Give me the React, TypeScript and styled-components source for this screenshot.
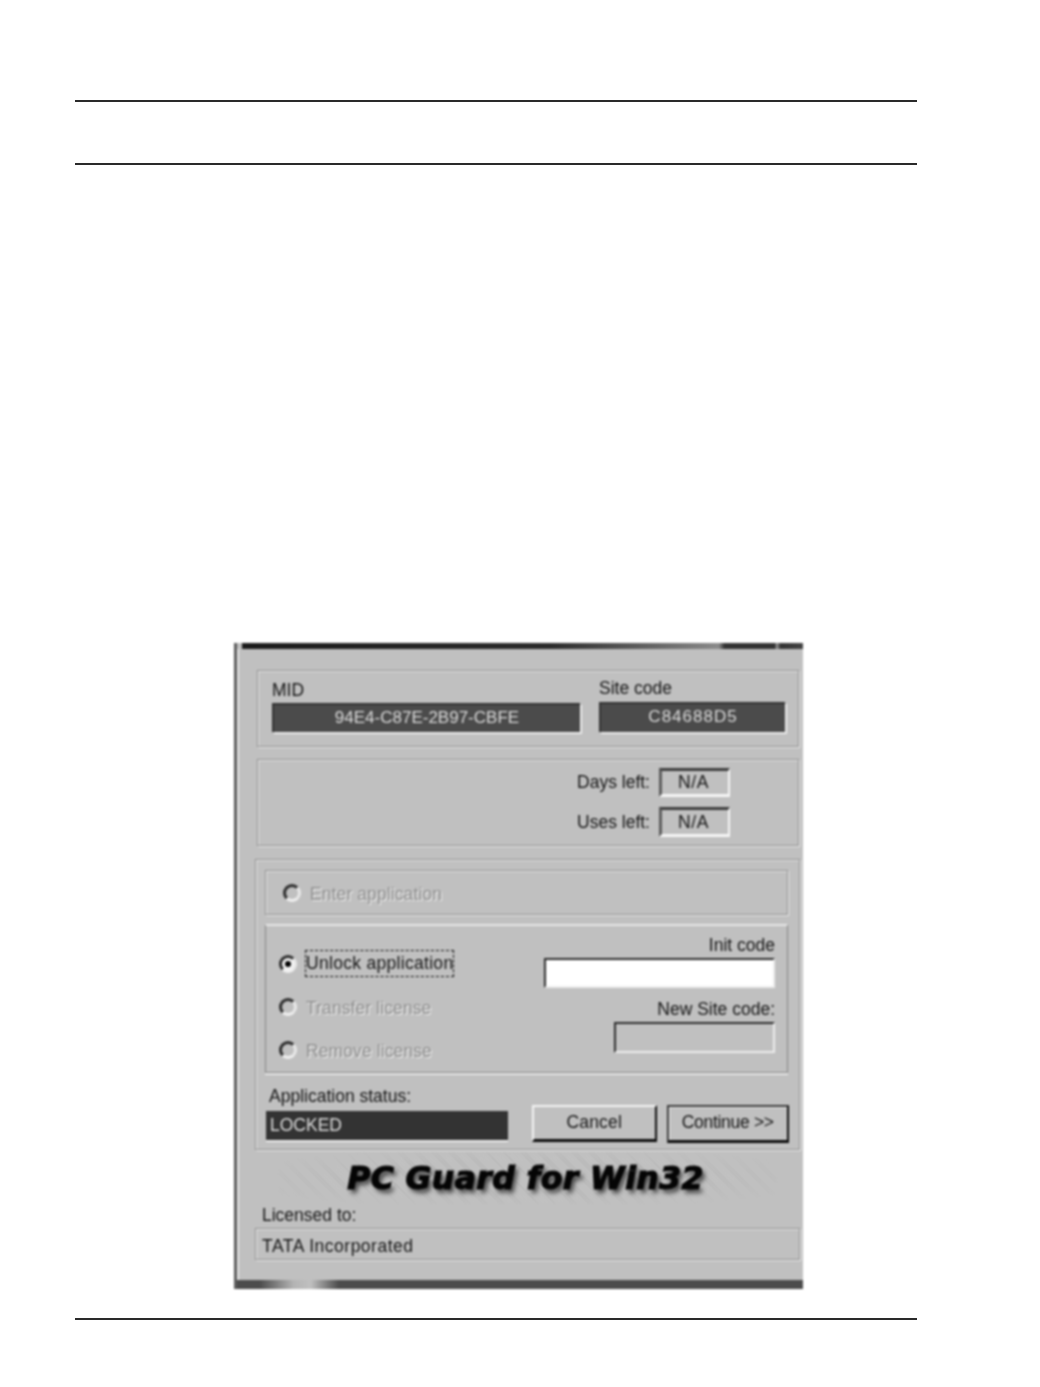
import React from "react";
import styled, { createGlobalStyle } from "styled-components";

const Global = createGlobalStyle`
  html, body { margin: 0; padding: 0; background: #fff; }
  * { box-sizing: border-box; }
`;

const Page = styled.div`
  width: 1040px;
  height: 1387px;
  padding-top: 100px;
  background: #fff;
  overflow: hidden;
  font-family: "Liberation Sans", Arial, sans-serif;
`;

const Rule = styled.div<{ $gap?: number }>`
  width: 842px;
  height: 2px;
  margin-left: 75px;
  margin-top: ${(p) => p.$gap ?? 0}px;
  background: #2a2a2a;
`;

const Dialog = styled.div`
  width: 569px;
  height: 646px;
  margin: 478px 0 0 234px;
  display: flex;
  flex-direction: column;
  background: #c0c0c0;
  color: #141414;
  font-size: 17.5px;
  filter: blur(0.85px);
  border-left: 3px solid #5c5c5c;
`;

const TitleStrip = styled.div`
  height: 6px;
  flex: none;
  margin-left: 5px;
  background: linear-gradient(
    90deg,
    #1c1c1c 0,
    #2c2c2c 55%,
    #8a8a8a 85%,
    #333 86%,
    #333 95%,
    #999 95.3%,
    #333 96%,
    #444 100%
  );
`;

const Body = styled.div`
  flex: 1;
  min-height: 0;
  padding: 21px 3px 0 16px;
  box-shadow: inset 2px 0 0 #e4e4e4;
`;

const Etched = styled.div`
  border: 1px solid #8e8e8e;
  box-shadow: 1px 1px 0 #ececec, inset 1px 1px 0 #e6e6e6;
`;

const IdGroup = styled(Etched)`
  width: 542px;
  height: 77px;
  margin-left: 4px;
  padding: 0 0 14px 14px;
  display: flex;
  align-items: flex-end;
  gap: 19px;
`;

const IdColumn = styled.div`
  display: flex;
  flex-direction: column;
`;

const Label = styled.div<{ $after?: number; $before?: number; $indent?: number }>`
  height: 20px;
  line-height: 20px;
  white-space: nowrap;
  margin-top: ${(p) => p.$before ?? 0}px;
  margin-bottom: ${(p) => p.$after ?? 3}px;
  margin-left: ${(p) => p.$indent ?? 0}px;
`;

const DarkField = styled.div<{ $w: number; $h: number; $spread?: number }>`
  width: ${(p) => p.$w}px;
  height: ${(p) => p.$h}px;
  line-height: ${(p) => p.$h - 4}px;
  text-align: center;
  font-size: 17px;
  letter-spacing: ${(p) => p.$spread ?? 0}px;
  background: #4b4b4b;
  color: #dcdcdc;
  border-top: 2px solid #333;
  border-left: 2px solid #333;
  box-shadow: 2px 2px 0 #ececec;
`;

const CounterGroup = styled(Etched)`
  width: 542px;
  height: 87px;
  margin: 12px 0 0 4px;
  padding: 8px 68px 0 0;
  display: flex;
  flex-direction: column;
  align-items: flex-end;
  gap: 10px;
`;

const CounterRow = styled.div`
  display: flex;
  align-items: center;
  gap: 9px;
`;

const CounterBox = styled.div<{ $h: number }>`
  width: 71px;
  height: ${(p) => p.$h}px;
  line-height: ${(p) => p.$h - 6}px;
  padding-right: 3px;
  text-align: center;
  letter-spacing: 0.6px;
  border-top: 3px solid #3e3e3e;
  border-left: 3px solid #5e5e5e;
  border-right: 2px solid #f6f6f6;
  border-bottom: 3px solid #f6f6f6;
`;

const ActionGroup = styled(Etched)`
  width: 545px;
  height: 291px;
  margin: 13px 0 0 2px;
  padding: 10px 0 0 9px;
`;

const DisabledPanel = styled(Etched)`
  width: 523px;
  height: 45px;
  padding-left: 17px;
  display: flex;
  align-items: center;
  gap: 9px;
`;

const UnlockPanel = styled.div`
  width: 523px;
  height: 149px;
  margin-top: 9px;
  padding: 0 12px 0 13px;
  display: flex;
  justify-content: space-between;
  border: 1px solid #858585;
  border-top-color: #e6e6e6;
  border-top-width: 2px;
  box-shadow: 0 2px 0 #e6e6e6;
`;

const Options = styled.div`
  padding-top: 16px;
  display: flex;
  flex-direction: column;
`;

const OptionRow = styled.div`
  height: 43px;
  display: flex;
  align-items: center;
  gap: 9px;
`;

const Radio = styled.span<{ $checked?: boolean }>`
  position: relative;
  flex: none;
  width: 18px;
  height: 18px;
  border-radius: 50%;
  border: 3px solid;
  border-color: #2e2e2e #e8e8e8 #f0f0f0 #2e2e2e;
  background: ${(p) => (p.$checked ? "#f4f4f4" : "#c0c0c0")};
  &::after {
    content: "";
    display: ${(p) => (p.$checked ? "block" : "none")};
    position: absolute;
    left: 3px;
    top: 3px;
    width: 6px;
    height: 6px;
    border-radius: 50%;
    background: #000;
  }
`;

const OptionText = styled.span<{ $off?: boolean; $focus?: boolean }>`
  white-space: nowrap;
  padding: ${(p) => (p.$focus ? "2px 0" : "3px 0 0")};
  margin-left: ${(p) => (p.$focus ? "-1px" : "0")};
  color: ${(p) => (p.$off ? "#8c8c8c" : "#141414")};
  letter-spacing: ${(p) => (p.$focus ? "0.3px" : "0.1px")};
  text-shadow: ${(p) => (p.$off ? "1px 1px 0 #f4f4f4" : "none")};
  border: ${(p) => (p.$focus ? "1px dashed #111" : "none")};
`;

const CodeColumn = styled.div`
  padding-top: 9px;
  display: flex;
  flex-direction: column;
  align-items: flex-end;
`;

const CodeInput = styled.div<{ $w: number; $h: number; $fill: string }>`
  width: ${(p) => p.$w}px;
  height: ${(p) => p.$h}px;
  background: ${(p) => p.$fill};
  border-top: 2px solid #2c2c2c;
  border-left: 2px solid #2c2c2c;
  border-right: 2px solid #ececec;
  border-bottom: 2px solid #ececec;
`;

const StatusRow = styled.div`
  margin: 13px 0 0 1px;
  display: flex;
  align-items: flex-start;
`;

const StatusColumn = styled.div`
  width: 242px;
  margin-right: 24px;
`;

const StatusField = styled.div`
  width: 242px;
  height: 29px;
  line-height: 29px;
  padding-left: 4px;
  background: #333;
  color: #dedede;
  box-shadow: 0 2px 0 #ececec;
`;

const Button = styled.div<{ $w: number; $h: number; $main?: boolean }>`
  width: ${(p) => p.$w}px;
  height: ${(p) => p.$h}px;
  margin-top: 19px;
  margin-right: 10px;
  line-height: ${(p) => p.$h - 7}px;
  text-align: center;
  letter-spacing: ${(p) => (p.$main ? "-0.3px" : "0.2px")};
  border-top: 2px solid ${(p) => (p.$main ? "#3a3a3a" : "#f4f4f4")};
  border-left: 2px solid ${(p) => (p.$main ? "#3a3a3a" : "#f4f4f4")};
  border-right: 2px solid #0c0c0c;
  border-bottom: 3px solid #0c0c0c;
  box-shadow: ${(p) => (p.$main ? "inset 1px 1px 0 #f0f0f0" : "none")};
`;

const LogoBand = styled.div`
  position: relative;
  height: 55px;
  width: 545px;
  margin-left: 2px;
  display: flex;
  align-items: center;
  justify-content: center;
  &::before {
    content: "";
    position: absolute;
    left: 24px;
    right: 24px;
    top: 2px;
    bottom: 1px;
    background: repeating-linear-gradient(45deg, #b0b0b0 0 1px, #c6c6c6 1px 3px);
    -webkit-mask-image: radial-gradient(ellipse at center, #000 50%, transparent 85%);
    mask-image: radial-gradient(ellipse at center, #000 50%, transparent 85%);
  }
`;

const LogoText = styled.div`
  position: relative;
  left: -2px;
  font-family: "DejaVu Sans", sans-serif;
  font-weight: 700;
  font-style: oblique;
  font-size: 31.5px;
  letter-spacing: 0.4px;
  white-space: nowrap;
  color: #050505;
  -webkit-text-stroke: 1.2px #050505;
  text-shadow: 3px 4px 4px #444;
`;

const LicenseField = styled(Etched)`
  width: 545px;
  height: 32px;
  margin-left: 2px;
  line-height: 34px;
  padding-left: 6px;
  letter-spacing: 0.5px;
`;

const BottomStrip = styled.div`
  height: 9px;
  flex: none;
  background: linear-gradient(90deg, #4c4c4c 0, #4c4c4c 4%, #b4b4b4 10%, #c0c0c0 13%, #4c4c4c 18%, #4c4c4c 100%);
`;

export default function App() {
  return (
    <Page>
      <Global />
      <Rule />
      <Rule $gap={61} />
      <Dialog>
        <TitleStrip />
        <Body>
          <IdGroup>
            <IdColumn>
              <Label>MID</Label>
              <DarkField $w={308} $h={29}>94E4-C87E-2B97-CBFE</DarkField>
            </IdColumn>
            <IdColumn>
              <Label $after={4}>Site code</Label>
              <DarkField $w={186} $h={30} $spread={1}>C84688D5</DarkField>
            </IdColumn>
          </IdGroup>

          <CounterGroup>
            <CounterRow>
              <span>Days left:</span>
              <CounterBox $h={29}>N/A</CounterBox>
            </CounterRow>
            <CounterRow>
              <span>Uses left:</span>
              <CounterBox $h={30}>N/A</CounterBox>
            </CounterRow>
          </CounterGroup>

          <ActionGroup>
            <DisabledPanel>
              <Radio />
              <OptionText $off>Enter application</OptionText>
            </DisabledPanel>
            <UnlockPanel>
              <Options>
                <OptionRow>
                  <Radio $checked />
                  <OptionText $focus>Unlock application</OptionText>
                </OptionRow>
                <OptionRow>
                  <Radio />
                  <OptionText $off>Transfer license</OptionText>
                </OptionRow>
                <OptionRow>
                  <Radio />
                  <OptionText $off>Remove license</OptionText>
                </OptionRow>
              </Options>
              <CodeColumn>
                <Label>Init code</Label>
                <CodeInput $w={231} $h={30} $fill="#fff" />
                <Label $before={11}>New Site code:</Label>
                <CodeInput $w={161} $h={31} $fill="#c0c0c0" />
              </CodeColumn>
            </UnlockPanel>
            <StatusRow>
              <StatusColumn>
                <Label $after={5} $indent={3}>Application status:</Label>
                <StatusField>LOCKED</StatusField>
              </StatusColumn>
              <Button $w={125} $h={37}>Cancel</Button>
              <Button $w={123} $h={38} $main>Continue &gt;&gt;</Button>
            </StatusRow>
          </ActionGroup>

          <LogoBand>
            <LogoText>PC Guard for Win32</LogoText>
          </LogoBand>
          <Label $after={3} $indent={9}>Licensed to:</Label>
          <LicenseField>TATA Incorporated</LicenseField>
        </Body>
        <BottomStrip />
      </Dialog>
      <Rule $gap={29} />
    </Page>
  );
}
